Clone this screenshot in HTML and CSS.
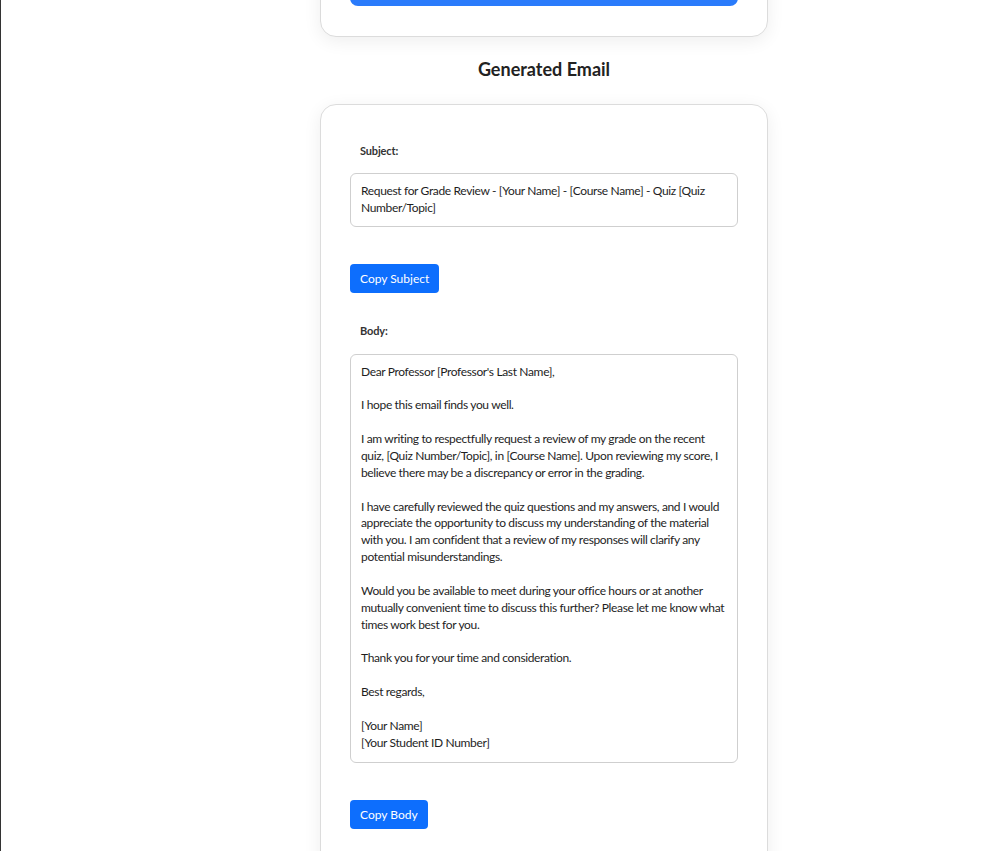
FILE: index.html
```html
<!DOCTYPE html>
<html lang="en">
<head>
<meta charset="utf-8">
<title>Generated Email</title>
<link rel="stylesheet" href="styles.css">
</head>
<body>
<div class="page">
  <main class="main">
    <section class="card card-top">
      <button class="btn-wide" type="button" aria-label="Generate Email"></button>
    </section>

    <h2 class="heading">Generated Email</h2>

    <section class="card card-email">
      <label class="field-label">Subject:</label>
      <div class="field-box">Request for Grade Review - [Your Name] - [Course Name] - Quiz [Quiz Number/Topic]</div>
      <button class="btn" type="button">Copy Subject</button>

      <label class="field-label field-label-body">Body:</label>
      <div class="field-box field-box-body">Dear Professor [Professor's Last Name],

I hope this email finds you well.

I am writing to respectfully request a review of my grade on the recent quiz, [Quiz Number/Topic], in [Course Name]. Upon reviewing my score, I believe there may be a discrepancy or error in the grading.

I have carefully reviewed the quiz questions and my answers, and I would appreciate the opportunity to discuss my understanding of the material with you. I am confident that a review of my responses will clarify any potential misunderstandings.

Would you be available to meet during your office hours or at another mutually convenient time to discuss this further? Please let me know what times work best for you.

Thank you for your time and consideration.

Best regards,

[Your Name]
[Your Student ID Number]</div>
      <button class="btn" type="button">Copy Body</button>
    </section>
  </main>
</div>
</body>
</html>
```

FILE: styles.css
```css
html, body {
  margin: 0;
  padding: 0;
  background: #ffffff;
  height: 100%;
  overflow: hidden;
}

body {
  font-family: Lato, "Noto Sans", "Liberation Sans", sans-serif;
  color: #222;
}

.page {
  min-height: 100%;
  border-left: 1px solid #333;
  box-sizing: border-box;
}

.main {
  padding-left: 80px;
  display: flex;
  flex-direction: column;
  align-items: center;
}

.card {
  width: 448px;
  box-sizing: border-box;
  background: #fff;
  border: 1px solid #dcdcdc;
  border-radius: 16px;
  box-shadow: 0 4px 18px rgba(0, 0, 0, 0.07);
}

.card-top {
  margin-top: -40px;
  padding: 0 29px 30px;
}

.btn-wide {
  display: block;
  width: 100%;
  height: 45px;
  border: none;
  border-radius: 8px;
  background: #2a7bfb;
}

.heading {
  margin: 20px 0 23px;
  font-size: 18px;
  line-height: 24px;
  font-weight: 700;
  color: #222;
}

.card-email {
  padding: 30px 29px 60px;
  display: flex;
  flex-direction: column;
  align-items: flex-start;
}

.field-label {
  display: block;
  margin-top: 8px;
  padding-left: 10px;
  font-size: 11px;
  line-height: 16px;
  font-weight: 700;
  letter-spacing: -0.15px;
  color: #333;
}

.field-label-body {
  margin-top: 30px;
}

.field-box {
  align-self: stretch;
  margin-top: 14px;
  padding: 9px 10px;
  border: 1px solid #cfcfcf;
  border-radius: 6px;
  font-size: 12px;
  line-height: 16.86px;
  letter-spacing: -0.35px;
  color: #1e1e1e;
  white-space: pre-wrap;
}

.field-box-body {
  margin-top: 15px;
  padding-bottom: 11px;
}

.btn {
  margin-top: 37px;
  padding: 6px 10px;
  border: none;
  border-radius: 4px;
  background: #0d6efd;
  color: #fff;
  font-family: inherit;
  font-size: 12px;
  line-height: 17px;
}
```
